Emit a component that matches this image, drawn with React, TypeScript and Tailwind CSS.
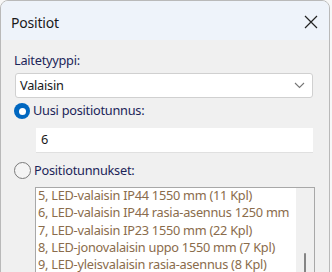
import React from 'react';

const items = [
  '5, LED-valaisin IP44 1550 mm (11 Kpl)',
  '6, LED-valaisin IP44 rasia-asennus 1250 mm',
  '7, LED-valaisin IP23 1550 mm (22 Kpl)',
  '8, LED-jonovalaisin uppo 1550 mm (7 Kpl)',
  '9, LED-yleisvalaisin rasia-asennus (8 Kpl)',
  '10, Erottelukivaimeen vaatteet (5 Kpl)',
];

const App: React.FC = () => {
  return (
    <div className="w-[332px] h-[272px] overflow-hidden bg-[#f7f7f7]" style={{ fontFamily: '"Segoe UI", "Noto Sans", sans-serif' }}>
      <div className="w-[330px] h-[280px] rounded-t-[8px] border border-[#b9b9b9] bg-[#f0f0f0] overflow-hidden flex flex-col">
        {/* Title bar */}
        <div className="h-[39px] shrink-0 bg-[#eef3fa] flex items-center justify-between pl-[10px] pr-[11px] pt-[3px]">
          <span className="text-[14px] tracking-[-0.2px] text-[#1a1a1a]">Positiot</span>
          <svg width="14" height="14" viewBox="0 0 14 14" className="text-[#222]">
            <path d="M1 1 L13 13 M13 1 L1 13" stroke="currentColor" strokeWidth="1.2" fill="none" />
          </svg>
        </div>

        <div className="flex flex-col pl-[13px] pr-[16px] pt-[9px] text-[12.75px] tracking-[-0.25px] text-[#1c2559]">
          <div className="h-[22px] leading-[22px]">Laitetyyppi:</div>
          <div className="ml-[1px] mt-[2px] h-[25px] bg-white border border-[#d0d0d0] rounded-[3px] flex items-center justify-between pl-[4px] pr-[7px] text-[#1a1a1a]">
            <span>Valaisin</span>
            <svg width="11" height="7" viewBox="0 0 11 7">
              <path d="M1 1 L5.5 5.5 L10 1" stroke="#777" strokeWidth="1.1" fill="none" />
            </svg>
          </div>

          <div className="mt-[5px] flex items-center gap-[3px] h-[16px]">
            <div className="w-[16px] h-[16px] rounded-full bg-[#0067c0] flex items-center justify-center">
              <div className="w-[7px] h-[7px] rounded-full bg-white" />
            </div>
            <span>Uusi positiotunnus:</span>
          </div>

          <div className="ml-[22px] mt-[9px] h-[25px] bg-white border-b border-[#e0e0e0] flex items-center pl-[5px] text-[#1a1a1a]">
            6
          </div>

          <div className="mt-[9px] flex items-center gap-[3px] h-[17px]">
            <div className="w-[17px] h-[17px] rounded-full border border-[#7a7a7a] bg-[#f4f4f4]" />
            <span>Positiotunnukset:</span>
          </div>

          <div className="ml-[21px] mr-[-2px] mt-[8px] h-[100px] bg-white border border-[#a8a8a8] flex">
            <div className="flex-1 pl-[2px] mt-[-1px] text-[#8a6c4c] leading-[17.25px] overflow-hidden whitespace-nowrap">
              {items.map((t) => (
                <div key={t}>{t}</div>
              ))}
            </div>
            <div className="w-[18px] bg-[#f0f0f0] relative">
              <div className="absolute left-[8px] top-[65px] w-[2px] h-[40px] bg-[#858585] rounded-full" />
            </div>
          </div>
        </div>
      </div>
    </div>
  );
};

export default App;
